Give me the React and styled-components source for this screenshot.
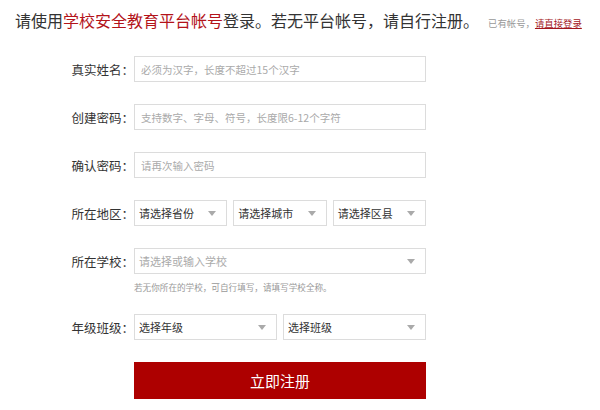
import React from 'react';
import styled, { createGlobalStyle } from 'styled-components';

const GlobalStyle = createGlobalStyle`
    html, body {
        margin: 0;
        padding: 0;
        background: #fff;
    }
    body {
        font-family: "Noto Sans CJK SC", "Noto Sans", sans-serif;
        color: #333;
    }
    * {
        box-sizing: border-box;
    }
`

const fields = [
    { label: '真实姓名', placeholder: '必须为汉字，长度不超过15个汉字' },
    { label: '创建密码', placeholder: '支持数字、字母、符号，长度限6-12个字符' },
    { label: '确认密码', placeholder: '请再次输入密码' },
];

const App = () => {
    return (
        <Page>
            <GlobalStyle />
            <Header>
                <Title>
                    请使用<Red>学校安全教育平台帐号</Red>登录。若无平台帐号，请自行注册。
                </Title>
                <Small>
                    已有帐号，<LoginLink href="#">请直接登录</LoginLink>
                </Small>
            </Header>

            <Form>
                {fields.map((f) => (
                    <Row key={f.label}>
                        <Label>{f.label}：</Label>
                        <Input placeholder={f.placeholder} />
                    </Row>
                ))}

                <Row>
                    <Label>所在地区：</Label>
                    <Selects>
                        <Select><span>请选择省份</span><Arrow /></Select>
                        <Select><span>请选择城市</span><Arrow /></Select>
                        <Select><span>请选择区县</span><Arrow /></Select>
                    </Selects>
                </Row>

                <Row $tight>
                    <Label>所在学校：</Label>
                    <Select $wide $muted><span>请选择或输入学校</span><Arrow /></Select>
                </Row>
                <Hint>若无你所在的学校，可自行填写，请填写学校全称。</Hint>

                <Row>
                    <Label>年级班级：</Label>
                    <Selects>
                        <Select><span>选择年级</span><Arrow /></Select>
                        <Select><span>选择班级</span><Arrow /></Select>
                    </Selects>
                </Row>

                <ButtonRow>
                    <Submit>立即注册</Submit>
                </ButtonRow>
            </Form>
        </Page>
    );
};

export default App;

const Page = styled.div`
    width: 600px;
    height: 410px;
    overflow: hidden;
`

const Header = styled.div`
    display: flex;
    align-items: baseline;
    gap: 9px;
    padding: 9px 0 0 15px;
`

const Title = styled.h1`
    margin: 0;
    font-size: 16px;
    line-height: 22px;
    font-weight: normal;
    color: #333;
`

const Red = styled.span`
    color: #b3131a;
`

const Small = styled.span`
    font-size: 9.4px;
    color: #999;
`

const LoginLink = styled.a`
    color: #a3161c;
    text-decoration: underline;
`

const Form = styled.div`
    padding-top: 25px;
`

const Row = styled.div`
    display: flex;
    align-items: center;
    height: 26px;
    margin-bottom: ${(p) => (p.$tight ? '6px' : '22px')};
`

const Label = styled.label`
    width: 134px;
    flex: none;
    text-align: right;
    font-size: 12.5px;
    color: #333;
`

const Input = styled.input`
    width: 292px;
    height: 26px;
    border: 1px solid #dcdcdc;
    padding: 0 6px;
    font-family: inherit;
    font-size: 10.5px;
    outline: none;
    &::placeholder {
        color: #aaa;
    }
`

const Selects = styled.div`
    display: flex;
    gap: 6px;
    width: 292px;
`

const Select = styled.div`
    flex: 1;
    ${(p) => p.$wide && 'flex: none; width: 292px;'}
    height: 26px;
    border: 1px solid #dcdcdc;
    display: flex;
    align-items: center;
    justify-content: space-between;
    padding: 0 10px 0 4px;
    font-size: 11px;
    color: ${(p) => (p.$muted ? '#aaa' : '#333')};
`

const Arrow = styled.i`
    width: 0;
    height: 0;
    border-left: 4px solid transparent;
    border-right: 4px solid transparent;
    border-top: 5px solid #aaa;
`

const Hint = styled.div`
    padding-left: 134px;
    height: 14px;
    line-height: 14px;
    font-size: 8.6px;
    color: #999;
    margin-bottom: 20px;
`

const ButtonRow = styled.div`
    padding-left: 134px;
`

const Submit = styled.button`
    width: 292px;
    height: 37px;
    border: none;
    background: #ad0000;
    color: #fff;
    font-family: inherit;
    font-size: 15px;
    cursor: pointer;
`
